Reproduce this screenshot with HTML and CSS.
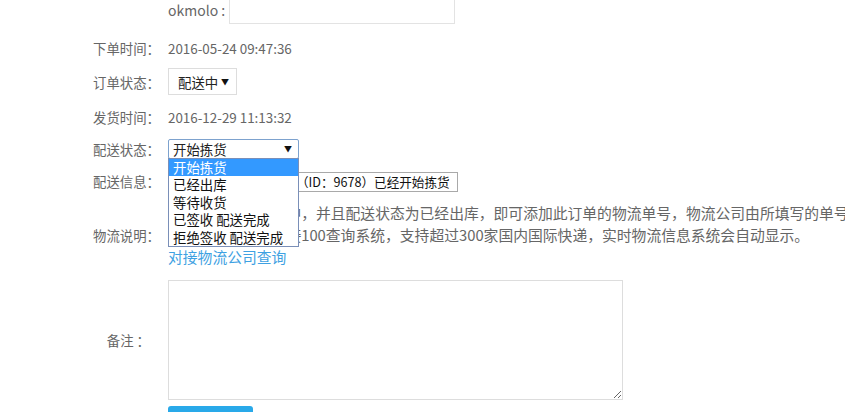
FILE: index.html
```html
<!DOCTYPE html>
<html lang="zh-CN">
<head>
    <meta charset="UTF-8">
    <meta name="viewport" content="width=device-width, initial-scale=1.0">
    <title>订单详情</title>
    <link rel="stylesheet" href="styles.css">
</head>
<body>
    <div class="order-form">
        <div class="row row-extra">
            <div class="label"></div>
            <div class="value">
                <span class="extra-name">okmolo :</span><input type="text" class="text-input">
            </div>
        </div>
        <div class="row row-text row-date">
            <div class="label">下单时间：</div>
            <div class="value">2016-05-24 09:47:36</div>
        </div>
        <div class="row">
            <div class="label">订单状态：</div>
            <div class="value">
                <div class="fake-select status-select">配送中<span class="arrow">▼</span></div>
            </div>
        </div>
        <div class="row row-text">
            <div class="label">发货时间：</div>
            <div class="value">2016-12-29 11:13:32</div>
        </div>
        <div class="row row-text">
            <div class="label">配送状态：</div>
            <div class="value select-wrap">
                <div class="fake-select ship-select">开始拣货<span class="arrow">▼</span></div>
                <ul class="dropdown">
                    <li class="active">开始拣货</li>
                    <li>已经出库</li>
                    <li>等待收货</li>
                    <li>已签收 配送完成</li>
                    <li>拒绝签收 配送完成</li>
                </ul>
            </div>
        </div>
        <div class="row row-text">
            <div class="label">配送信息：</div>
            <div class="value">
                <input type="text" class="info-input" value="尊敬的用户，您的订单（ID：9678）已经开始拣货">
            </div>
        </div>
        <div class="row row-tight">
            <div class="label">物流说明：</div>
            <div class="value desc">
                <span class="desc-line">当订单状态为配送中，并且配送状态为已经出库，即可添加此订单的物流单号，物流公司由所填写的单号自动识别，</span>
                <span class="desc-line">物流单号将自动对接100查询系统，支持超过300家国内国际快递，实时物流信息系统会自动显示。</span>
                <a href="#" class="desc-link">对接物流公司查询</a>
            </div>
        </div>
        <div class="row">
            <div class="label label-note">备注 ：</div>
            <div class="value">
                <textarea class="note"></textarea>
            </div>
        </div>
        <div class="row row-button">
            <div class="label"></div>
            <div class="value">
                <button class="submit">提交</button>
            </div>
        </div>
    </div>
</body>
</html>
```

FILE: styles.css
```css
body {
    margin: 0;
    background-color: #fff;
    color: #666;
    font-family: "Noto Sans CJK SC", "Noto Sans", sans-serif;
    font-size: 13.4px;
    overflow: hidden;
}
.order-form {
    display: flex;
    flex-direction: column;
    gap: 12px;
    margin-top: -4px;
}
.row {
    display: flex;
    align-items: center;
    gap: 8px;
}
.row-text {
    min-height: 20px;
}
.row-date {
    margin-top: 2px;
    margin-bottom: -2px;
}
.row-tight {
    margin-top: -2px;
}
.row-button {
    margin-top: -6px;
}
.label {
    width: 160px;
    flex-shrink: 0;
    text-align: right;
    line-height: 20px;
    white-space: nowrap;
}
.label-note {
    width: 150px;
    margin-right: 10px;
}
.value {
    line-height: 20px;
    white-space: nowrap;
}
.extra-name {
    display: inline-block;
    width: 61px;
    font-size: 14px;
    vertical-align: middle;
}
.text-input {
    box-sizing: border-box;
    width: 226px;
    height: 28px;
    border: 1px solid #e3e3e3;
    vertical-align: middle;
}
.fake-select {
    box-sizing: border-box;
    display: flex;
    align-items: center;
    justify-content: space-between;
    background-color: #fff;
    color: #222;
    cursor: default;
}
.arrow {
    font-size: 8px;
    color: #111;
}
.status-select {
    width: 69px;
    height: 27px;
    padding: 0 7px 0 9px;
    border: 1px solid #ddd;
}
.select-wrap {
    position: relative;
}
.ship-select {
    width: 131px;
    height: 20px;
    padding: 0 6px 0 4px;
    border: 1px solid #7da2ce;
    border-radius: 2px;
}
.dropdown {
    position: absolute;
    top: 19px;
    left: 0;
    z-index: 2;
    box-sizing: border-box;
    width: 131px;
    margin: 0;
    padding: 0;
    list-style: none;
    background-color: #fff;
    border: 1px solid #7a8fb8;
    color: #111;
}
.dropdown li {
    height: 17.4px;
    line-height: 17px;
    padding-left: 4px;
}
.dropdown li.active {
    background-color: #3399ff;
    color: #fff;
}
.info-input {
    box-sizing: border-box;
    width: 290px;
    height: 20px;
    padding: 0 1px;
    border: 1px solid #a9a9a9;
    font-family: inherit;
    font-size: 12.6px;
    color: #111;
}
.desc {
    display: flex;
    flex-direction: column;
    font-size: 14.8px;
    line-height: 22px;
}
.desc-link {
    color: #3ea1e2;
    text-decoration: none;
}
.note {
    box-sizing: border-box;
    display: block;
    width: 455px;
    height: 120px;
    border: 1px solid #ddd;
    resize: both;
}
.submit {
    width: 85px;
    height: 30px;
    border: none;
    border-radius: 3px;
    background-color: #29a9e9;
    color: #fff;
    font-family: inherit;
    font-size: 14px;
}
```
